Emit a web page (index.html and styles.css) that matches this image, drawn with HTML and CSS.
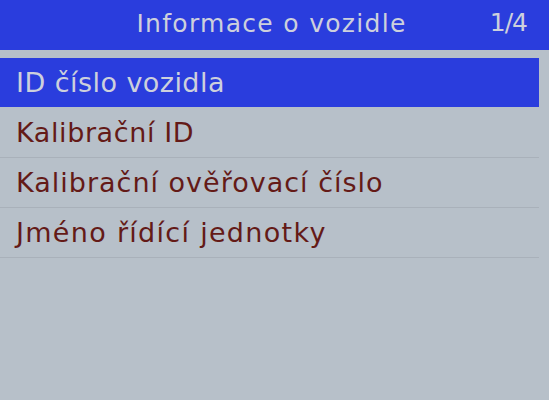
FILE: index.html
```html
<!DOCTYPE html>
<html lang="cs">
<head>
<meta charset="utf-8">
<link rel="stylesheet" href="styles.css">
</head>
<body>
<div class="screen">
  <div class="header">
    <span class="title">Informace o vozidle</span>
    <span class="page">1/4</span>
  </div>
  <ul class="menu">
    <li class="item selected sp1">ID číslo vozidla</li>
    <li class="item sp2">Kalibrační ID</li>
    <li class="item sp3">Kalibrační ověřovací číslo</li>
    <li class="item sp4">Jméno řídící jednotky</li>
  </ul>
</div>
</body>
</html>
```
FILE: styles.css
```css
html, body {
  margin: 0;
  padding: 0;
}
.screen {
  width: 549px;
  height: 400px;
  background: #b7c0c9;
  font-family: "DejaVu Sans", sans-serif;
  overflow: hidden;
}
.header {
  height: 50px;
  box-sizing: border-box;
  padding-bottom: 4px;
  background: #2a3ddd;
  color: #cdd0dc;
  position: relative;
  display: flex;
  align-items: center;
  justify-content: center;
  font-size: 25px;
  letter-spacing: 1.3px;
}
.title {
  margin-left: -6px;
}
.page {
  position: absolute;
  right: 22px;
  top: 8px;
  letter-spacing: -1px;
}
.menu {
  list-style: none;
  margin: 8px 0 0 0;
  padding: 0;
}
.item {
  height: 50px;
  box-sizing: border-box;
  border-bottom: 1px solid #a9b1ba;
  display: flex;
  align-items: center;
  padding-left: 16px;
  font-size: 27px;
  color: #641a17;
  width: 539px;
}
.item.selected {
  background: #2a3ddd;
  color: #cdd0dc;
  border-bottom-color: #b7c0c9;
}
.sp1 { letter-spacing: 0.45px; }
.sp2 { letter-spacing: 0.6px; }
.sp3 { letter-spacing: 1px; }
.sp4 { letter-spacing: 1.3px; }
```
